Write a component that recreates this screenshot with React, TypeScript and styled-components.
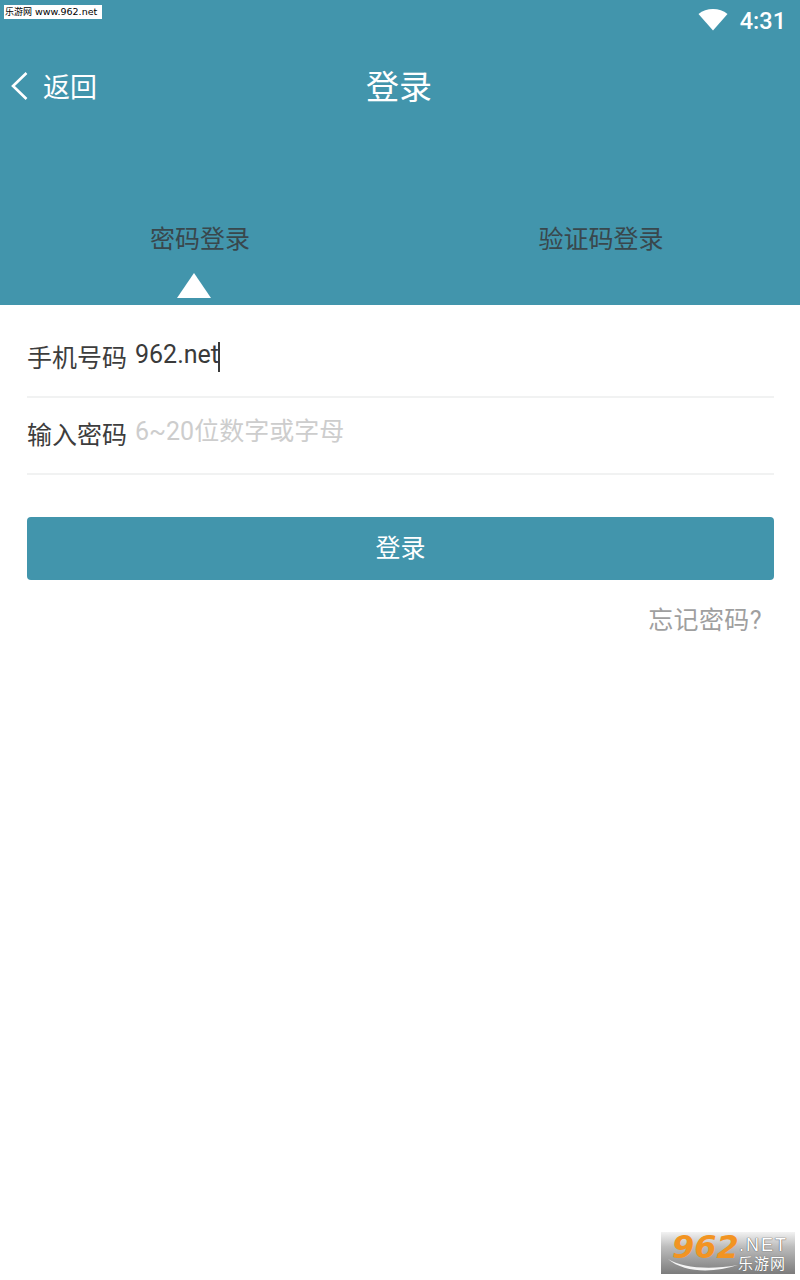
import React from "react";
import styled, { createGlobalStyle } from "styled-components";

const Global = createGlobalStyle`
  html, body { margin: 0; padding: 0; background: #fff; }
  body { font-family: Roboto, "Noto Sans CJK SC", sans-serif; }
  * { box-sizing: border-box; }
`;

const Page = styled.div`
  position: relative;
  width: 800px;
  height: 1280px;
  overflow: hidden;
  background: #fff;
`;

const Header = styled.header`
  height: 305px;
  background: #4295ac;
  display: flex;
  flex-direction: column;
`;

const StatusBar = styled.div`
  height: 41px;
  padding: 0 14px 0 0;
  display: flex;
  align-items: center;
  justify-content: flex-end;
  gap: 12px;
`;

const WifiIcon = styled.svg`
  margin-top: -2px;
`;

const Clock = styled.span`
  margin-top: 1px;
  color: #fff;
  font-size: 23.5px;
  font-weight: 500;
  line-height: 41px;
`;

const NavBar = styled.div`
  height: 90px;
  padding: 0 0 0 11px;
  position: relative;
  display: flex;
  align-items: center;
`;

const BackLink = styled.div`
  display: flex;
  align-items: center;
  gap: 15px;
  color: #fff;
  font-size: 27px;
  font-weight: 400;
`;

const BackText = styled.span`
  margin-top: -2px;
`;

const Title = styled.h1`
  position: absolute;
  left: 0;
  right: 2px;
  top: 2px;
  margin: 0;
  line-height: 90px;
  text-align: center;
  color: #fff;
  font-size: 33px;
  font-weight: 400;
`;

const Tabs = styled.nav`
  flex: 1;
  display: grid;
  grid-template-columns: 1fr 1fr;
`;

const Tab = styled.div<{ $shift?: number }>`
  display: flex;
  flex-direction: column;
  align-items: center;
  padding-top: 89px;
  padding-left: ${(p) => p.$shift ?? 0}px;
  color: #39474c;
  font-size: 25px;
  font-weight: 400;
  line-height: 40px;
`;

const Caret = styled.span`
  width: 0;
  height: 0;
  margin: 13px 13px 0 0;
  border-left: 17px solid transparent;
  border-right: 17px solid transparent;
  border-bottom: 25px solid #fff;
`;

const Form = styled.section`
  padding: 0 26px 0 27px;
  display: flex;
  flex-direction: column;
`;

const Field = styled.div<{ $tall?: boolean }>`
  height: ${(p) => (p.$tall ? 93 : 77)}px;
  display: flex;
  align-items: flex-start;
  gap: 8px;
  border-bottom: 2px solid #f1f2f2;
`;

const Label = styled.label<{ $top: number }>`
  flex: none;
  margin-top: ${(p) => p.$top}px;
  color: #3d3d3d;
  font-size: 25px;
  font-weight: 400;
  line-height: 40px;
  white-space: nowrap;
`;

const Value = styled.div<{ $placeholder?: boolean }>`
  display: flex;
  align-items: center;
  margin-top: ${(p) => (p.$placeholder ? 14 : 30)}px;
  color: ${(p) => (p.$placeholder ? "#cdcdcd" : "#3a3a3a")};
  font-size: 25px;
  font-weight: 400;
  line-height: 40px;
`;

const Cursor = styled.span`
  display: inline-block;
  width: 2px;
  height: 30px;
  background: #3a3a3a;
  margin: 3px 0 0 -1px;
`;

const Submit = styled.button`
  margin-top: 42px;
  height: 63px;
  border: 0;
  border-radius: 4px;
  background: #4295ac;
  color: #fff;
  font-family: inherit;
  font-size: 25px;
  font-weight: 400;
  padding: 0 0 6px;
`;

const Forgot = styled.a`
  align-self: flex-end;
  margin: 21px 12px 0 0;
  color: #9f9f9f;
  font-size: 25px;
  font-weight: 400;
  line-height: 40px;
  letter-spacing: 0.4px;
`;

const SiteTag = styled.div`
  position: absolute;
  left: 4px;
  top: 5px;
  width: 98px;
  height: 14px;
  background: #fff;
  color: #000;
  font-family: "DejaVu Sans", "Noto Sans CJK SC", sans-serif;
  font-size: 9px;
  line-height: 14px;
  padding-left: 1px;
  white-space: nowrap;
  overflow: hidden;
`;

const SiteUrl = styled.span`
  font-size: 9.5px;
  margin-left: 3px;
`;

const Badge = styled.div`
  position: absolute;
  left: 661px;
  top: 1232px;
  width: 134px;
  height: 42px;
  background: linear-gradient(#f2f2f2 0%, #bdbdbd 35%, #7c7c7c 100%);
`;

const BadgeNum = styled.span`
  position: absolute;
  left: 11px;
  top: -1px;
  color: #f29422;
  font-family: "DejaVu Sans", sans-serif;
  font-size: 32px;
  font-style: italic;
  font-weight: 700;
  line-height: 32px;
`;

const BadgeNet = styled.span`
  position: absolute;
  left: 78px;
  top: 3px;
  color: #fff;
  font-family: "Liberation Sans", sans-serif;
  font-size: 18px;
  font-weight: 400;
  line-height: 20px;
  letter-spacing: 2px;
  text-shadow: 0 0 1px #555, 0 0 1px #555;
`;

const BadgeCn = styled.span`
  position: absolute;
  left: 77px;
  top: 22px;
  color: #fff;
  font-size: 15px;
  line-height: 20px;
  letter-spacing: 1px;
  white-space: nowrap;
  text-shadow: 0 0 1px #555;
`;

const BadgeSwoosh = styled.svg`
  position: absolute;
  left: 5px;
  top: 26px;
`;

export default function App() {
  return (
    <Page>
      <Global />
      <Header>
        <StatusBar>
          <WifiIcon width="30" height="23" viewBox="0 0 30 23">
            <path d="M15 22.500 0.500 6C4.500 2.500 9.500 1 15 1s10.500 1.500 14.500 5L15 22.500Z" fill="#fff" />
          </WifiIcon>
          <Clock>4:31</Clock>
        </StatusBar>
        <NavBar>
          <BackLink>
            <svg width="17" height="30" viewBox="0 0 17 30">
              <path d="M15.500 2 2 15l13.500 13" fill="none" stroke="#fff" strokeWidth="2.6" />
            </svg>
            <BackText>返回</BackText>
          </BackLink>
          <Title>登录</Title>
        </NavBar>
        <Tabs>
          <Tab>
            密码登录
            <Caret />
          </Tab>
          <Tab $shift={2}>验证码登录</Tab>
        </Tabs>
      </Header>
      <Form>
        <Field $tall>
          <Label $top={34}>手机号码</Label>
          <Value>
            962.net
            <Cursor />
          </Value>
        </Field>
        <Field>
          <Label $top={18}>输入密码</Label>
          <Value $placeholder>6~20位数字或字母</Value>
        </Field>
        <Submit>登录</Submit>
        <Forgot>忘记密码?</Forgot>
      </Form>
      <SiteTag>
        乐游网<SiteUrl>www.962.net</SiteUrl>
      </SiteTag>
      <Badge>
        <BadgeNum>962</BadgeNum>
        <BadgeNet>.NET</BadgeNet>
        <BadgeCn>乐游网</BadgeCn>
        <BadgeSwoosh width="74" height="14" viewBox="0 0 74 14">
          <path d="M2 1C16 10 44 12 72 7 48 15 18 15 2 1Z" fill="#f4f4f4" />
        </BadgeSwoosh>
      </Badge>
    </Page>
  );
}
